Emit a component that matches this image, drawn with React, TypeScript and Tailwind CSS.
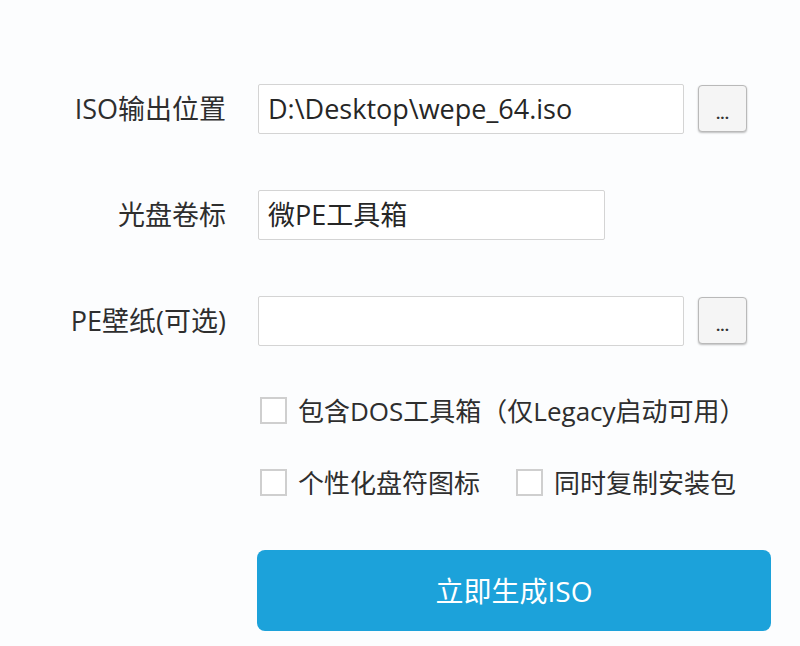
const font = "font-['Open_Sans','Noto_Sans_CJK_SC',sans-serif]";

function Field({ label, value, width, browse }: { label: string; value: string; width: string; browse?: boolean }) {
  return (
    <div className="flex items-center h-[50px]">
      <span className="w-[226px] text-right text-[27px] text-[#2e2e2e]">{label}</span>
      <div className={`ml-[32px] h-[50px] ${width} border border-[#d4d4d4] rounded-[2px] bg-white flex items-center px-[9px] text-[27px] text-[#262626]`}>
        {value}
      </div>
      {browse && (
        <div className="ml-[14px] w-[49px] h-[47px] -mt-[2px] border border-[#b9b9b9] rounded-[4px] bg-[#f5f5f5] shadow-[0_1px_2px_rgba(0,0,0,0.25)] flex items-end justify-center pb-[10px] text-[15px] leading-none text-[#333333] font-bold">
          ...
        </div>
      )}
    </div>
  );
}

function Check({ label }: { label: string }) {
  return (
    <div className="flex items-center">
      <span className="w-[27px] h-[27px] border-2 border-[#cfcfcf] bg-white" />
      <span className="ml-[11px] text-[26px] text-[#2e2e2e] leading-none">{label}</span>
    </div>
  );
}

export default function App() {
  return (
    <div className={`min-h-screen bg-[#fcfdfe] pt-[84px] ${font}`}>
      {/* form rows */}
      <Field label="ISO输出位置" value="D:\Desktop\wepe_64.iso" width="w-[426px]" browse />
      <div className="mt-[56px]">
        <Field label="光盘卷标" value="微PE工具箱" width="w-[347px]" />
      </div>
      <div className="mt-[56px]">
        <Field label="PE壁纸(可选)" value="" width="w-[426px]" browse />
      </div>

      {/* options */}
      <div className="ml-[260px] mt-[51px]">
        <Check label="包含DOS工具箱（仅Legacy启动可用）" />
        <div className="flex items-center gap-[36px] mt-[45px]">
          <Check label="个性化盘符图标" />
          <Check label="同时复制安装包" />
        </div>
      </div>

      <div className="ml-[257px] mt-[54px] w-[514px] h-[81px] rounded-[8px] bg-[#1ca2da] flex items-center justify-center text-white text-[28px]">
        立即生成ISO
      </div>
    </div>
  );
}
